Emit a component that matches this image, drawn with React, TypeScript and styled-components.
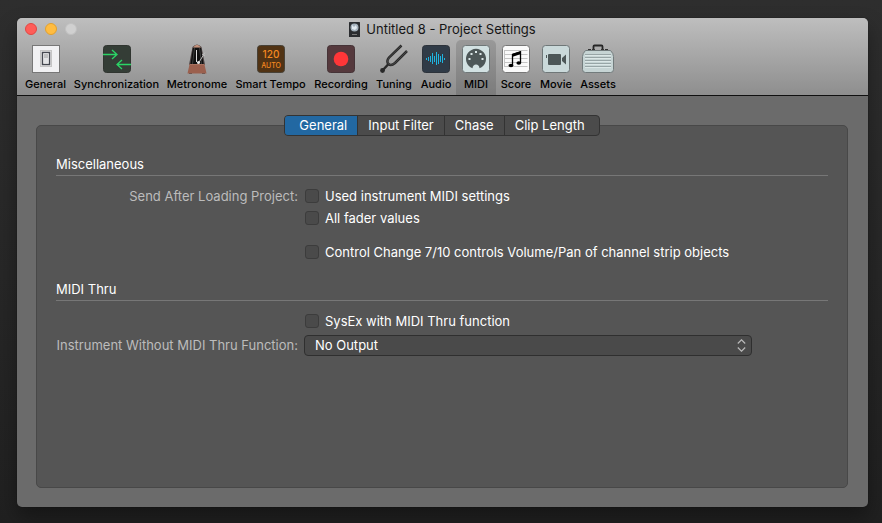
import React, { useState } from 'react';
import styled, { createGlobalStyle } from 'styled-components';

const GlobalStyle = createGlobalStyle`
  *, *::before, *::after { box-sizing: border-box; }
  body {
    margin: 0;
    background: linear-gradient(#2e2e2e, #262626 60%, #202020);
    color: #fff;
    font-family: Inter, Roboto, "Liberation Sans", sans-serif;
    font-size: 13px;
    line-height: 16px;
  }
  button, input, select { font: inherit; color: inherit; margin: 0; }
`;

const Desktop = styled.div`
  display: flex;
  min-height: 100vh;
  padding: 18px 14px 16px 17px;
`;

const Window = styled.main`
  flex: 1;
  min-width: 0;
  display: flex;
  flex-direction: column;
  overflow: hidden;
  border-radius: 5px;
  background: #6b6b6b;
`;

const Shadow = styled.div`
  flex: 1;
  min-width: 0;
  display: flex;
  border-radius: 5px;
  box-shadow: 0 0 1px #111, 0 10px 20px rgba(0, 0, 0, 0.35);
`;

const Header = styled.header`
  background: linear-gradient(#bebebe, #8e8e8e);
  border-bottom: 1px solid #101010;
  color: #000;
`;

const TitleBar = styled.div`
  display: grid;
  grid-template-columns: 1fr auto 1fr;
  align-items: center;
  height: 22px;
  padding: 0 8px;
`;

const Lights = styled.div`
  display: flex;
  gap: 8px;
`;

const Light = styled.button<{ $fill: string; $edge: string }>`
  width: 12px;
  height: 12px;
  padding: 0;
  border: 1px solid ${(p) => p.$edge};
  border-radius: 50%;
  background: ${(p) => p.$fill};
`;

const Title = styled.h1`
  display: flex;
  align-items: center;
  gap: 6px;
  margin: 0;
  font-size: 13px;
  font-weight: 400;
  color: #161616;
`;

const Toolbar = styled.nav`
  display: grid;
  grid-template-columns: 49px 93px 68px 79px 62px 44px repeat(4, 40px) 44px;
  padding: 0 4px;
`;

const ToolButton = styled.button<{ $active: boolean }>`
  display: flex;
  flex-direction: column;
  align-items: center;
  gap: 3px;
  height: 55px;
  padding: 4px 0 0;
  border: 0;
  border-radius: 5px 5px 0 0;
  background: ${(p) => (p.$active ? 'rgba(0, 0, 0, 0.13)' : 'transparent')};
  font-size: 11px;
  font-weight: 500;
  line-height: 14px;
  white-space: nowrap;
`;

const Body = styled.div`
  flex: 1;
  display: flex;
  flex-direction: column;
  padding: 19px 20px 19px 19px;
`;

const Tabs = styled.div`
  z-index: 1;
  align-self: center;
  display: flex;
  margin-bottom: -11px;
  border: 1px solid #333;
  border-radius: 4px;
  background: #4b4b4b;
  overflow: hidden;
`;

const Tab = styled.button<{ $active: boolean }>`
  height: 19px;
  padding: 0 10px;
  border: 0;
  background: ${(p) => (p.$active ? '#2268a2' : 'transparent')};
  line-height: 19px;

  & + & { border-left: 1px solid #333; }
  &:first-child { padding-left: 14px; }
  &:last-child { padding-right: 14px; }
`;

const Panel = styled.div`
  flex: 1;
  padding: 30px 19px;
  border: 1px solid #484848;
  border-radius: 5px;
  background: #555;
`;

const Section = styled.section`
  & + & { margin-top: 18px; }
`;

const Heading = styled.h2`
  margin: 0 0 9px;
  padding-bottom: 3px;
  border-bottom: 1px solid #777;
  font-size: 13px;
  font-weight: 400;
`;

const Row = styled.div<{ $space?: number }>`
  display: grid;
  grid-template-columns: 242px minmax(0, 1fr);
  column-gap: 7px;
  align-items: center;
  min-height: 22px;
  margin-top: ${(p) => p.$space ?? 0}px;
`;

const RowLabel = styled.label`
  text-align: right;
  color: #bcbcbc;
  white-space: nowrap;
`;

const CheckLabel = styled.label`
  grid-column: 2;
  display: flex;
  align-items: center;
  gap: 6px;
`;

const CheckBox = styled.input`
  appearance: none;
  width: 14px;
  height: 14px;
  border: 1px solid #3c3c3c;
  border-radius: 3px;
  background: #4a4a4a;

  &:checked { background: #2268a2; }
`;

const SelectBox = styled.div`
  display: grid;
  align-items: center;
  margin-left: -1px;
  margin-right: 76px;

  > * { grid-area: 1 / 1; }
  > svg { justify-self: end; margin-right: 6px; pointer-events: none; }
`;

const Select = styled.select`
  appearance: none;
  width: 100%;
  height: 21px;
  padding: 0 24px 0 10px;
  border: 1px solid #2f2f2f;
  border-radius: 4px;
  background: #4a4a4a;
`;

const Icon = ({ w = 28, children }: { w?: number; children: React.ReactNode }) => (
  <svg width={w} height={30} viewBox={`0 0 ${w} 30`} aria-hidden="true">{children}</svg>
);

const GeneralIcon = () => (
  <Icon>
    <rect x=".5" y="1.5" width="27" height="27" fill="#f1f1f3" stroke="#777" />
    <rect x="8.5" y="6.5" width="11" height="16" fill="#e2e2e3" stroke="#c5c5c5" />
    <rect x="10.5" y="8.5" width="7" height="12" fill="#fafafa" stroke="#454850" strokeWidth="1.4" />
    <rect x="12" y="10" width="4" height="4" fill="#bfc0c1" />
    <rect x="12" y="14" width="4" height="5" fill="#e3e4e6" />
  </Icon>
);

const SyncIcon = () => (
  <Icon>
    <rect x=".5" y="1.5" width="27" height="27" rx="3" fill="#343d36" stroke="#303530" />
    <path d="M0 10.5h13M9 6l5 4.5L9 15M28 20.5H15M19 16l-5 4.5 5 4.5" fill="none" stroke="#2bd466" strokeWidth="1.3" />
  </Icon>
);

const MetronomeIcon = () => (
  <Icon>
    <path d="M9.500 3Q14-2 18.500 3L22 21H6z" fill="#4a4040" />
    <path d="M10 3.500h8L20.500 20h-13z" fill="#101010" />
    <path d="M10 3.500Q14-2 18 3.500z" fill="#c3917b" />
    <path d="M11.500 4L9.500 20M16.500 4l2 16" stroke="#3c3c3c" fill="none" />
    <path d="M13.500 6v12" stroke="#ddd" />
    <path d="M15.500 19L22 8.500M19 10l3 2" stroke="#bcbcbc" strokeWidth="1" />
    <circle cx="15.500" cy="18.500" r="1.500" fill="#e5e5e5" />
    <path d="M6.500 20.500h15l2 9h-19z" fill="#9b604e" />
    <path d="M6.500 20.500h15" stroke="#b77b66" strokeWidth=".8" />
    <path d="M6 30h3M19 30h3" stroke="#4c332a" />
  </Icon>
);

const SvgText = styled.text`
  font-family: Inter, Roboto, sans-serif;
  font-weight: 500;
  fill: #f58a20;
  text-anchor: middle;
`;

const TempoIcon = () => (
  <Icon>
    <rect x=".5" y="1.5" width="27" height="27" rx="3" fill="#513314" stroke="#474137" />
    <SvgText x="14" y="14" fontSize="10">120</SvgText>
    <SvgText x="14" y="24" fontSize="7">AUTO</SvgText>
  </Icon>
);

const RecordIcon = () => (
  <Icon>
    <rect x=".5" y="1.5" width="27" height="27" rx="3" fill="#55393d" stroke="#453337" />
    <circle cx="14" cy="15" r="7.300" fill="#ff3638" />
  </Icon>
);

const TuningIcon = () => (
  <Icon>
    <path d="M21.500 1.500L9 13.500Q6 17.500 8.500 20T15 19L27 7M8.500 20L2 27" fill="none" stroke="#2a2a2a" strokeWidth="2.500" />
    <path d="M21.500 1.500L9 13.500Q6 17.500 8.500 20T15 19L27 7" fill="none" stroke="#606060" strokeWidth=".5" />
    <circle cx="2.500" cy="26.500" r="2.400" fill="#292929" />
  </Icon>
);

const AudioIcon = () => (
  <Icon>
    <rect x=".5" y="1.5" width="27" height="27" rx="3" fill="#303b47" stroke="#2d333b" />
    <path d="M4.500 14v2M6.500 13v4M8.500 12v6M10.500 9v11M12.500 12v6M14.500 8v13M16.500 10v10M18.500 12v6M20.500 10v9M22.500 14v2" stroke="#1eb4e0" />
  </Icon>
);

const MidiIcon = () => (
  <Icon>
    <rect x=".5" y="1.5" width="27" height="27" rx="3" fill="#d2e1e2" stroke="#6f7778" />
    <path d="M10.500 24.200A10 10 0 1 1 17.500 24.200Q17 20.500 14 20.500T10.500 24.200z" fill="#4d5758" />
    <g fill="#dbe7e8">
      <rect x="13" y="7" width="2" height="2" /><rect x="8.500" y="9" width="2" height="2" />
      <rect x="17.500" y="9" width="2" height="2" /><rect x="6.500" y="14" width="2" height="2" />
      <rect x="19.500" y="14" width="2" height="2" />
    </g>
  </Icon>
);

const ScoreIcon = () => (
  <Icon>
    <rect x=".5" y="1.5" width="27" height="27" rx="3" fill="#fafafa" stroke="#777" />
    <path d="M2.500 6.500h23M2.500 10.500h23M2.500 14.500h23M2.500 18.500h23M2.500 22.500h23M2.500 6v17" stroke="#c4c4c4" />
    <path d="M10.500 21V10.500l8-2.500v11" fill="none" stroke="#000" strokeWidth="1.300" />
    <path d="M10 10l9-3v3l-9 3z" fill="#000" />
    <ellipse cx="9" cy="21.500" rx="2.400" ry="1.800" />
    <ellipse cx="16.800" cy="19" rx="2.400" ry="1.800" />
  </Icon>
);

const MovieIcon = () => (
  <Icon>
    <rect x=".5" y="1.5" width="27" height="27" rx="3" fill="#cad9da" stroke="#6f7778" />
    <rect x="6" y="10" width="13" height="11" rx="1" fill="#4d5758" />
    <path d="M20 14l4-3.500v10L20 17zM4 11h1v3H4z" fill="#4d5758" />
  </Icon>
);

const AssetsIcon = () => (
  <Icon w={32}>
    <path d="M11.500 5V2.500q0-1 1-1h7q1 0 1 1V5" fill="none" stroke="#252525" strokeWidth="1.800" />
    <path d="M6 5.500h3M10 5.500h3M19 5.500h3M23 5.500h3" stroke="#333" />
    <path d="M3.500 6.500h25q3 3 3 6v13q0 3-3 3h-25q-3 0-3-3v-13q0-3 3-6z" fill="#c6d4d4" stroke="#727b7c" />
    <path d="M3 10.500h26M3 13.500h26M3 16.500h26M3 19.500h26M3 22.500h26" stroke="#98a5a6" />
    <path d="M3 11.500h26M3 14.500h26M3 17.500h26M3 20.500h26M3 23.500h26" stroke="#dce7e7" />
  </Icon>
);

const DocumentIcon = () => (
  <svg width="11" height="15" viewBox="0 0 11 15" aria-hidden="true">
    <rect width="11" height="15" rx=".5" fill="#2a2c2f" />
    <circle cx="5.500" cy="5.500" r="4" fill="#a3b0bb" />
    <path d="M3 3l2 2 2-2 1 3-2 2-3-1z" fill="#e2eaf0" />
    <path d="M3 12.500h5" stroke="#777" />
  </svg>
);

const Arrows = () => (
  <svg width="9" height="13" viewBox="0 0 9 13" fill="none" stroke="#b9b9b9" strokeWidth="1.200" aria-hidden="true">
    <path d="M.8 4.500l3.700-3.700 3.700 3.700M.8 8.500l3.700 3.700 3.700-3.700" />
  </svg>
);

const tools = [
  { name: 'General', Glyph: GeneralIcon },
  { name: 'Synchronization', Glyph: SyncIcon },
  { name: 'Metronome', Glyph: MetronomeIcon },
  { name: 'Smart Tempo', Glyph: TempoIcon },
  { name: 'Recording', Glyph: RecordIcon },
  { name: 'Tuning', Glyph: TuningIcon },
  { name: 'Audio', Glyph: AudioIcon },
  { name: 'MIDI', Glyph: MidiIcon },
  { name: 'Score', Glyph: ScoreIcon },
  { name: 'Movie', Glyph: MovieIcon },
  { name: 'Assets', Glyph: AssetsIcon },
];

const tabs = ['General', 'Input Filter', 'Chase', 'Clip Length'];

export default function App() {
  const [tool, setTool] = useState('MIDI');
  const [tab, setTab] = useState('General');

  return (
    <>
      <GlobalStyle />
      <Desktop>
        <Shadow>
          <Window>
            <Header>
              <TitleBar>
                <Lights>
                  <Light aria-label="Close" $fill="#ff5d58" $edge="#e14743" />
                  <Light aria-label="Minimize" $fill="#ffbc41" $edge="#e2a02d" />
                  <Light aria-label="Zoom" disabled $fill="#d0d0d0" $edge="#c1c1c1" />
                </Lights>
                <Title><DocumentIcon />Untitled 8 - Project Settings</Title>
              </TitleBar>
              <Toolbar>
                {tools.map(({ name, Glyph }) => (
                  <ToolButton key={name} $active={tool === name} onClick={() => setTool(name)}>
                    <Glyph />
                    {name}
                  </ToolButton>
                ))}
              </Toolbar>
            </Header>
            <Body>
              <Tabs role="tablist">
                {tabs.map((name) => (
                  <Tab key={name} role="tab" aria-selected={tab === name} $active={tab === name} onClick={() => setTab(name)}>
                    {name}
                  </Tab>
                ))}
              </Tabs>
              <Panel>
                <Section>
                  <Heading>Miscellaneous</Heading>
                  <Row>
                    <RowLabel htmlFor="instrument-settings">Send After Loading Project:</RowLabel>
                    <CheckLabel><CheckBox id="instrument-settings" type="checkbox" />Used instrument MIDI settings</CheckLabel>
                  </Row>
                  <Row>
                    <CheckLabel><CheckBox type="checkbox" />All fader values</CheckLabel>
                  </Row>
                  <Row $space={12}>
                    <CheckLabel><CheckBox type="checkbox" />Control Change 7/10 controls Volume/Pan of channel strip objects</CheckLabel>
                  </Row>
                </Section>
                <Section>
                  <Heading>MIDI Thru</Heading>
                  <Row>
                    <CheckLabel><CheckBox type="checkbox" />SysEx with MIDI Thru function</CheckLabel>
                  </Row>
                  <Row $space={2}>
                    <RowLabel htmlFor="thru-instrument">Instrument Without MIDI Thru Function:</RowLabel>
                    <SelectBox>
                      <Select id="thru-instrument"><option>No Output</option></Select>
                      <Arrows />
                    </SelectBox>
                  </Row>
                </Section>
              </Panel>
            </Body>
          </Window>
        </Shadow>
      </Desktop>
    </>
  );
}
